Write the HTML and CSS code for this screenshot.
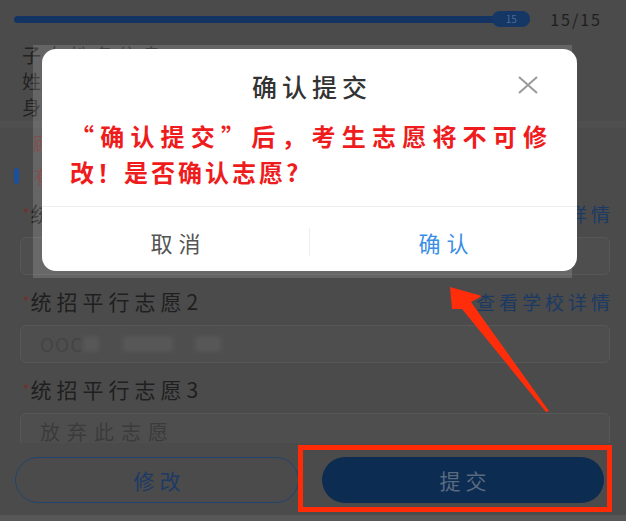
FILE: index.html
```html
<!DOCTYPE html>
<html lang="zh-CN">
<head>
  <meta charset="UTF-8" />
  <meta name="viewport" content="width=device-width, initial-scale=1.0"/>
  <title>确认提交</title>
  <link rel="stylesheet" href="styles.css">
</head>
<body>

  <div class="pagina">
    <div class="contenido">
      <!-- progreso -->
      <div class="progreso">
        <div class="barra">
          <span class="pulgar">15</span>
        </div>
        <span class="cuenta">15/15</span>
      </div>

      <!-- datos del alumno -->
      <div class="datos">
        <p>子女姓名信息</p>
        <p>姓名：</p>
        <p>身份证号：</p>
      </div>
      <div class="franja"></div>

      <p class="aviso">顾问提示：请仔细核对志愿信息</p>
      <div class="seccion">
        <span class="marca"></span>
        <span class="seccion-texto">有关志愿填报说明</span>
      </div>

      <!-- campos -->
      <div class="campo">
        <div class="etiqueta">
          <span><i>*</i>统招平行志愿1</span>
          <a class="enlace">查看学校详情</a>
        </div>
        <div class="entrada"></div>
      </div>

      <div class="campo">
        <div class="etiqueta">
          <span><i>*</i>统招平行志愿2</span>
          <a class="enlace">查看学校详情</a>
        </div>
        <div class="entrada">
          <span class="valor">OOC</span>
          <span class="borron b1"></span>
          <span class="borron b2"></span>
          <span class="borron b3"></span>
        </div>
      </div>

      <div class="campo">
        <div class="etiqueta">
          <span><i>*</i>统招平行志愿3</span>
        </div>
        <div class="entrada">
          <span class="valor gris">放弃此志愿</span>
        </div>
      </div>
    </div>

    <!-- botones -->
    <div class="pie">
      <button class="boton contorno">修改</button>
      <button class="boton lleno">提交</button>
    </div>
    <div class="borde-inferior"></div>
  </div>

  <!-- ventana de confirmación -->
  <div class="panel-gris"></div>
  <div class="modal">
    <div class="modal-cabecera">
      <h2>确认提交</h2>
      <svg class="cerrar" width="22" height="18" viewBox="0 0 22 18">
        <path d="M2 1 L20 17 M20 1 L2 17" stroke="#9a9a9a" stroke-width="2" fill="none"/>
      </svg>
    </div>
    <div class="modal-cuerpo">“确认提交”后，考生志愿将不可修改！是否确认志愿?</div>
    <div class="modal-pie">
      <span class="opcion cancelar">取消</span>
      <span class="separador"></span>
      <span class="opcion confirmar">确认</span>
    </div>
  </div>

  <!-- anotación roja -->
  <div class="recuadro"></div>
  <svg class="flecha" width="626" height="521" viewBox="0 0 626 521">
    <polygon points="450,287 482,296 471,302 549,411 546,412 462,309 452,309" fill="#ff2d0a"/>
  </svg>

</body>
</html>
```

FILE: styles.css
```css
* {
  box-sizing: border-box;
  margin: 0;
  padding: 0;
}

body, html {
  width: 626px;
  height: 521px;
  overflow: hidden;
  font-family: "Noto Sans CJK SC", "Noto Sans", sans-serif;
  background: #4b4b4b;
}

.pagina {
  height: 521px;
  display: flex;
  flex-direction: column;
}

.contenido {
  flex: 1;
  overflow: hidden;
}

/* progreso */
.progreso {
  height: 38px;
  display: flex;
  align-items: center;
  gap: 20px;
  padding: 0 24px 0 14px;
}

.barra {
  flex: 1;
  height: 7px;
  border-radius: 4px;
  background: #133462;
  display: flex;
  justify-content: flex-end;
  align-items: center;
}

.pulgar {
  width: 38px;
  height: 16px;
  border-radius: 8px;
  background: #143766;
  color: #4a6a98;
  font-size: 10px;
  line-height: 16px;
  text-align: center;
}

.cuenta {
  font-size: 16px;
  letter-spacing: 2px;
  color: #1e1e1e;
}

.datos {
  padding: 4px 22px 0;
  height: 83px;
}

.datos p {
  font-size: 19px;
  line-height: 26px;
  color: #222;
  letter-spacing: 5px;
}

.franja {
  height: 7px;
  background: #4f4f4f;
}

.aviso {
  padding: 0 33px;
  height: 30px;
  line-height: 30px;
  font-size: 18px;
  color: #6e3030;
  letter-spacing: 4px;
}

.seccion {
  display: flex;
  align-items: center;
  gap: 15px;
  height: 35px;
  padding-left: 14px;
}

.marca {
  width: 5px;
  height: 16px;
  border-radius: 3px;
  background: #1a4f9e;
}

.seccion-texto {
  font-size: 18px;
  color: #6e3030;
  letter-spacing: 4px;
}

/* campos */
.campo {
  padding: 0 16px 6px 20px;
}

.etiqueta {
  height: 40px;
  display: flex;
  justify-content: space-between;
  align-items: center;
  font-size: 21px;
  color: #1f1f1f;
  letter-spacing: 5px;
}

.etiqueta i {
  font-style: normal;
  color: #7a2b2b;
  font-size: 14px;
  margin: 0 1px 0 3px;
  letter-spacing: 0;
  vertical-align: 3px;
}

.enlace {
  font-size: 19px;
  letter-spacing: 4px;
  margin-right: -4px;
  color: #1b3a63;
}

.entrada {
  margin-top: 4px;
  height: 38px;
  border: 1px solid #575757;
  border-radius: 6px;
  background: #4e4e4e;
  display: flex;
  align-items: center;
  padding-left: 19px;
}

.valor {
  font-size: 19px;
  line-height: 20px;
  color: #444;
  letter-spacing: 1px;
}

.valor.gris {
  font-size: 20px;
  color: #3b3b3b;
  letter-spacing: 7px;
}

.borron {
  height: 16px;
  background: #575757;
  filter: blur(2px);
}

.b1 { width: 16px; }
.b2 { width: 50px; margin-left: 24px; }
.b3 { width: 26px; margin-left: 22px; }

/* botones */
.pie {
  height: 72px;
  display: flex;
  gap: 23px;
  padding: 14px 22px 12px 15px;
  background: #4b4b4b;
}

.boton {
  flex: 1;
  height: 46px;
  border-radius: 23px;
  font-family: inherit;
  font-size: 21px;
  letter-spacing: 5px;
  text-indent: 5px;
}

.boton.contorno {
  background: transparent;
  border: 1.5px solid #22426e;
  color: #1d3a66;
}

.boton.lleno {
  background: #0d2c51;
  border: none;
  color: #5a6a80;
}

.borde-inferior {
  height: 6px;
  background: #575757;
}

/* ventana */
.panel-gris {
  position: absolute;
  left: 33px;
  top: 45px;
  width: 539px;
  height: 233px;
  background: rgba(255, 255, 255, 0.15);
}

.modal {
  position: absolute;
  left: 42px;
  top: 49px;
  width: 535px;
  height: 222px;
  background: #fff;
  border-radius: 14px;
  display: flex;
  flex-direction: column;
}

.modal-cabecera {
  position: relative;
  flex-shrink: 0;
  padding-top: 21px;
  height: 53px;
  text-align: center;
}

.modal-cabecera h2 {
  font-size: 25px;
  font-weight: 500;
  line-height: 32px;
  color: #333;
  letter-spacing: 5px;
  text-indent: 5px;
}

.cerrar {
  position: absolute;
  right: 38px;
  top: 27px;
}

.modal-cuerpo {
  flex-shrink: 0;
  padding: 16px 27px 16px 28px;
  height: 104px;
  font-size: 24px;
  font-weight: 700;
  line-height: 36px;
  letter-spacing: 3px;
  text-align: justify;
  color: #ee1c1c;
}

.modal-pie {
  flex: 1;
  border-top: 1px solid #eeeeee;
  display: flex;
  align-items: center;
  padding-top: 6px;
}

.opcion {
  flex: 1;
  text-align: center;
  font-size: 22px;
  letter-spacing: 6px;
  text-indent: 6px;
}

.cancelar { color: #555; }
.confirmar { color: #3a8ee6; }

.separador {
  width: 1px;
  height: 28px;
  background: #eeeeee;
}

/* anotación */
.recuadro {
  position: absolute;
  left: 298px;
  top: 445px;
  width: 314px;
  height: 67px;
  border: 5px solid #ff2b06;
}

.flecha {
  position: absolute;
  left: 0;
  top: 0;
  pointer-events: none;
}
```
